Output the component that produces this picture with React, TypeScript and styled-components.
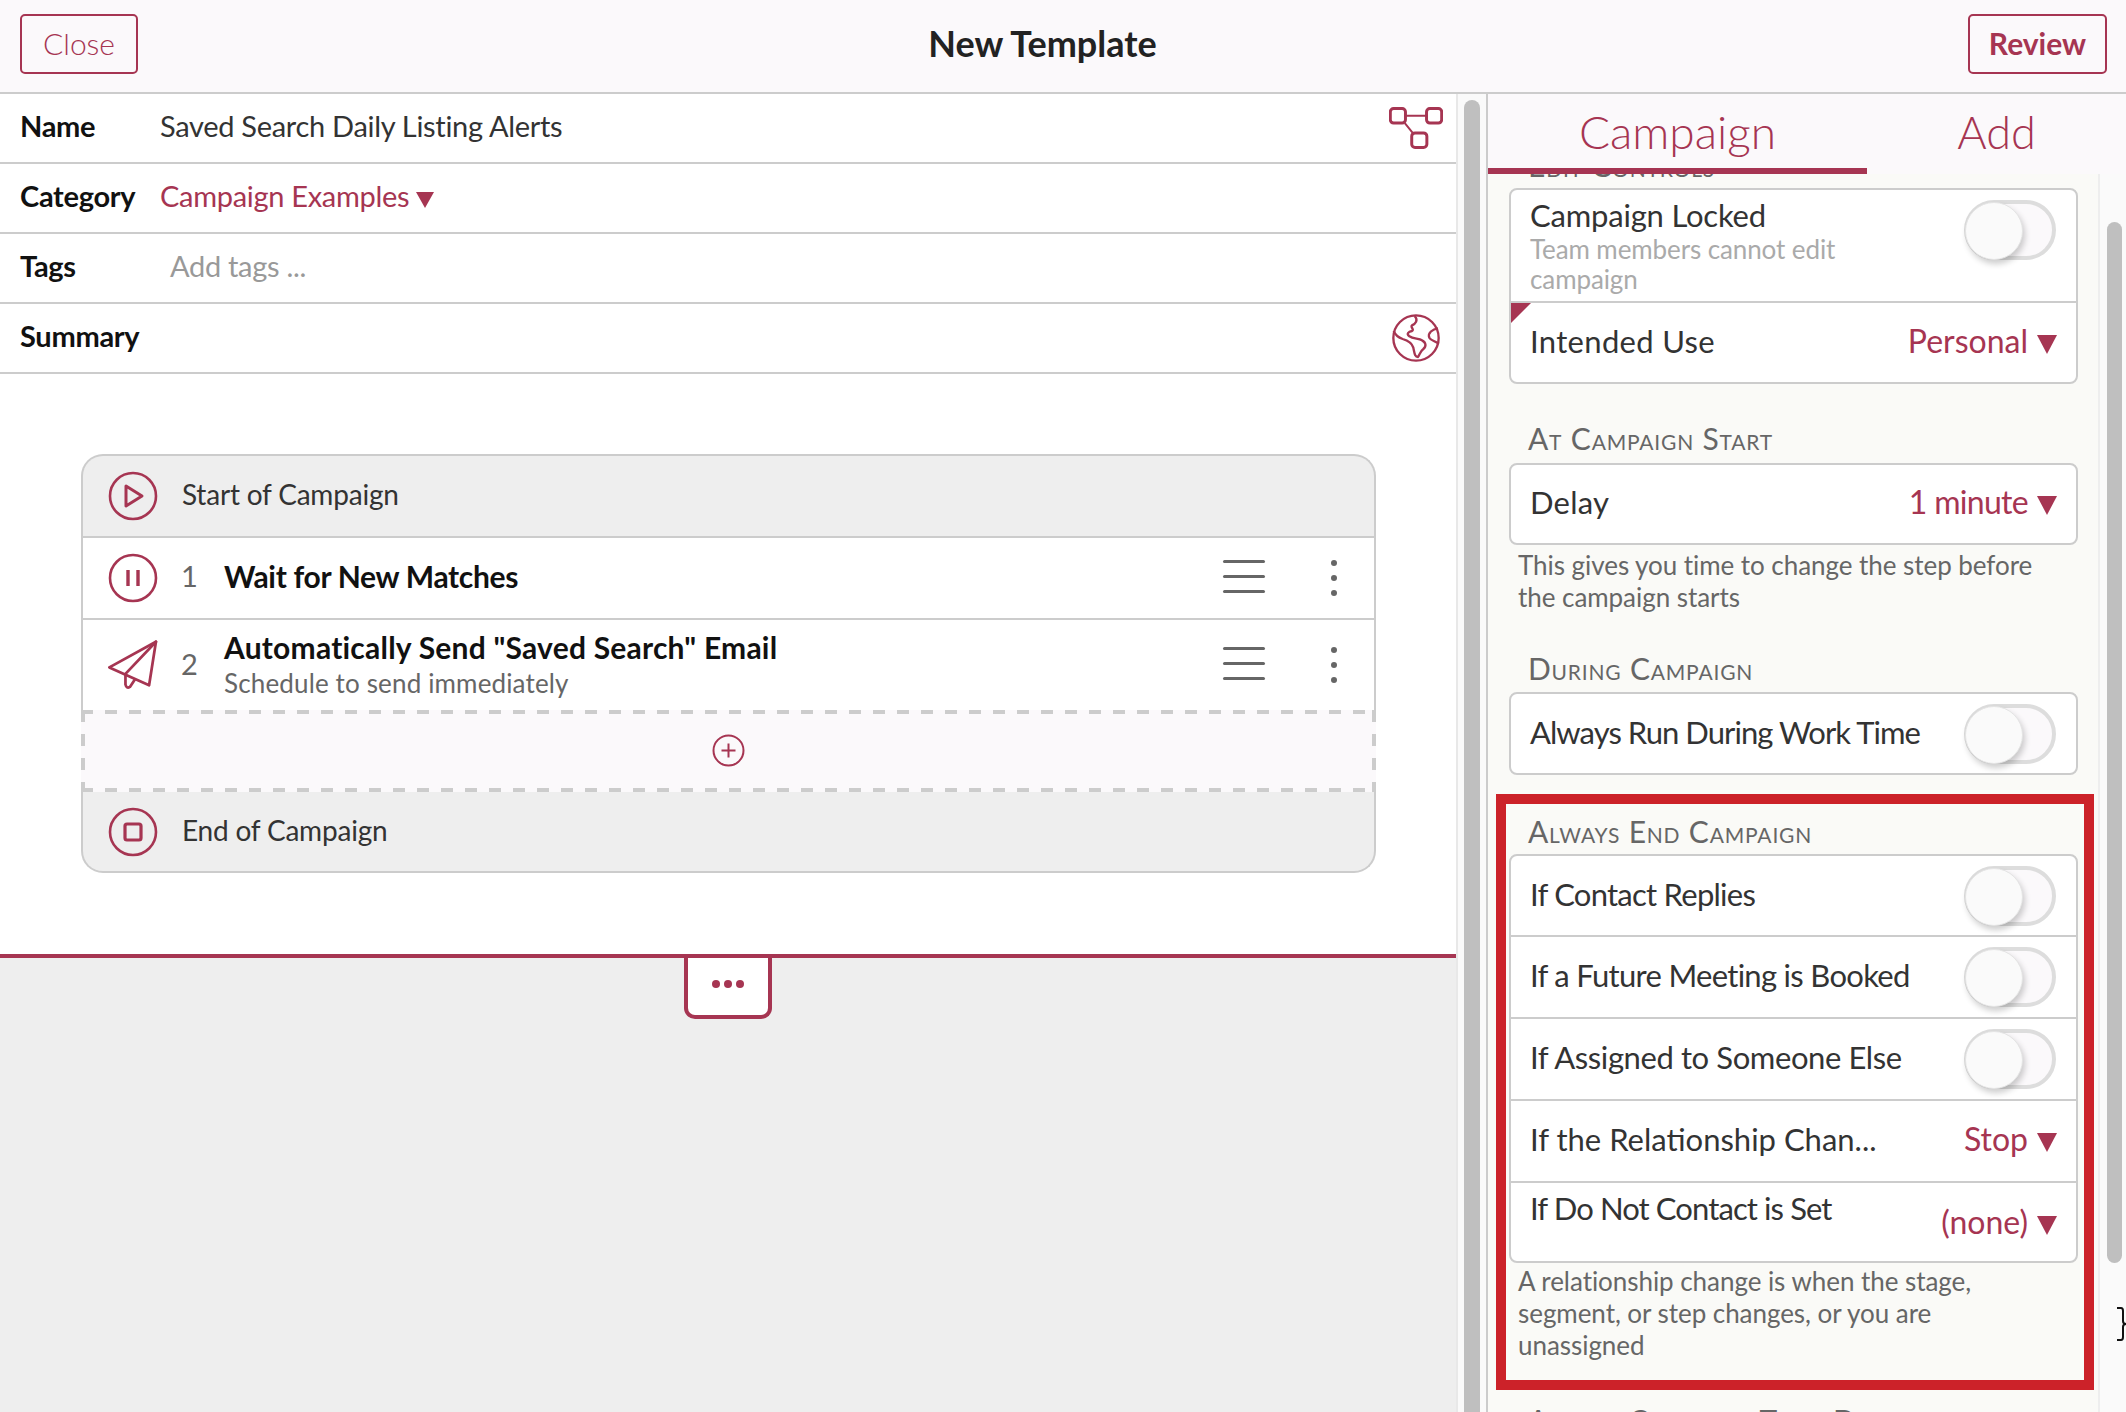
import React from "react";
import styled, { createGlobalStyle } from "styled-components";

const RED = "#a63552";
const FONT = `Lato, "Open Sans", "Liberation Sans", sans-serif`;

const Global = createGlobalStyle`
  html, body { margin: 0; padding: 0; background: #fff; }
  body { width: 2126px; height: 1412px; overflow: hidden; font-family: ${FONT}; color: #333; }
  * { box-sizing: border-box; }
`;

const Page = styled.div`
  position: relative;
  width: 2126px;
  height: 1412px;
  display: flex;
  flex-direction: column;
  overflow: hidden;
`;

const Header = styled.header`
  height: 94px;
  flex: none;
  display: flex;
  align-items: flex-start;
  justify-content: space-between;
  padding: 14px 19px 0 20px;
  background: #fbf9fb;
  border-bottom: 2px solid #ccc;
  position: relative;
`;

const HeadButton = styled.button<{ $strong?: boolean; $w: number }>`
  width: ${(p) => p.$w}px;
  height: 60px;
  background: transparent;
  border: 2.5px solid ${RED};
  border-radius: 5px;
  color: ${RED};
  font-family: ${FONT};
  font-size: 30px;
  font-weight: ${(p) => (p.$strong ? 700 : 300)};
  padding: 0 0 2px;
`;

const Title = styled.h1`
  position: absolute;
  left: 0;
  right: 0;
  top: 21px;
  margin: 0;
  text-align: center;
  font-size: 36px;
  line-height: 44px;
  font-weight: 700;
  color: #222;
  padding-right: 41px;
`;

const Main = styled.div`
  flex: 1;
  display: flex;
  min-height: 0;
`;

const Left = styled.section`
  width: 1456px;
  flex: none;
  display: flex;
  flex-direction: column;
`;

const FormRow = styled.div`
  height: 70px;
  flex: none;
  display: flex;
  align-items: center;
  padding: 0 13px 0 20px;
  border-bottom: 2px solid #ccc;
  font-size: 29px;
`;

const FormLabel = styled.span`
  width: 140px;
  flex: none;
  font-weight: 700;
  color: #111;
  letter-spacing: -0.3px;
  padding-bottom: 6px;
`;

const FormValue = styled.span<{ $tone?: "red" | "hint" }>`
  flex: 1;
  color: ${(p) => (p.$tone === "red" ? RED : p.$tone === "hint" ? "#999" : "#333")};
  padding-left: ${(p) => (p.$tone === "hint" ? 10 : 0)}px;
  font-weight: 400;
  letter-spacing: -0.3px;
  padding-bottom: 6px;
`;

const Caret = styled.span<{ $w?: number; $h?: number; $gap?: number }>`
  display: inline-block;
  width: 0;
  height: 0;
  margin-left: ${(p) => p.$gap ?? 9}px;
  border-left: ${(p) => (p.$w ?? 21) / 2}px solid transparent;
  border-right: ${(p) => (p.$w ?? 21) / 2}px solid transparent;
  border-top: ${(p) => p.$h ?? 19}px solid ${RED};
  vertical-align: -1px;
`;

const Canvas = styled.div`
  flex: none;
  padding: 80px 80px 81px 81px;
  border-bottom: 4px solid ${RED};
`;

const Flow = styled.div`
  background: #fff;
`;

const Terminal = styled.div<{ $end?: boolean }>`
  height: ${(p) => (p.$end ? 81 : 82)}px;
  background: #eee;
  display: flex;
  align-items: center;
  padding-left: 25px;
  gap: 24px;
  font-size: 28px;
  letter-spacing: -0.2px;
  color: #333;
  border: 2px solid #ccc;
  border-top-width: ${(p) => (p.$end ? 0 : 2)}px;
  border-bottom-width: ${(p) => (p.$end ? 2 : 0)}px;
  border-radius: ${(p) => (p.$end ? "0 0 22px 22px" : "22px 22px 0 0")};
`;

const TerminalLabel = styled.span`
  padding-bottom: 4px;
`;

const StepRow = styled.div<{ $h: number }>`
  height: ${(p) => p.$h}px;
  border: 2px solid #ccc;
  border-bottom: 0;
  display: flex;
  align-items: center;
  padding-left: 25px;
`;

const StepNumber = styled.span<{ $lift: number }>`
  width: 43px;
  margin-left: 23px;
  flex: none;
  font-size: 29px;
  color: #666;
  padding-bottom: ${(p) => p.$lift}px;
`;

const StepBody = styled.div<{ $lift: number }>`
  flex: 1;
  display: flex;
  flex-direction: column;
  padding-bottom: ${(p) => p.$lift}px;
`;

const StepTitle = styled.div<{ $sp: number }>`
  font-size: 30px;
  line-height: 38px;
  font-weight: 700;
  color: #111;
  letter-spacing: ${(p) => p.$sp}px;
`;

const StepSub = styled.div`
  font-size: 26px;
  line-height: 34px;
  color: #666;
  letter-spacing: 0.15px;
`;

const Burger = styled.div`
  width: 42px;
  flex: none;
  margin-right: 66px;
  display: flex;
  flex-direction: column;
  gap: 12px;
  margin-top: -4px;
  & > i {
    display: block;
    height: 3px;
    border-radius: 2px;
    background: #666;
  }
`;

const Dots = styled.div`
  width: 6px;
  flex: none;
  margin-right: 37px;
  display: flex;
  flex-direction: column;
  gap: 9px;
  & > i {
    display: block;
    height: 6px;
    border-radius: 50%;
    background: #666;
  }
`;

const Dropzone = styled.div`
  height: 82px;
  display: flex;
  align-items: center;
  justify-content: center;
  padding-bottom: 2px;
  background-color: #fbf9fb;
  background-image:
    repeating-linear-gradient(90deg, #ccc 0 12px, transparent 12px 24px),
    repeating-linear-gradient(90deg, #ccc 0 12px, transparent 12px 24px),
    repeating-linear-gradient(180deg, #ccc 0 12px, transparent 12px 24px),
    repeating-linear-gradient(180deg, #ccc 0 12px, transparent 12px 24px);
  background-size: 100% 4px, 100% 4px, 4px 100%, 4px 100%;
  background-position: 0 0, 0 100%, 0 0, 100% 0;
  background-repeat: no-repeat;
`;

const Drawer = styled.div`
  flex: 1;
  background: #eee;
  display: flex;
  justify-content: center;
`;

const DrawerTab = styled.button`
  width: 88px;
  height: 61px;
  background: #fff;
  border: 4px solid ${RED};
  border-top: 0;
  border-radius: 0 0 11px 11px;
  display: flex;
  align-items: center;
  justify-content: center;
  gap: 4px;
  padding: 0 0 5px;
  & > i {
    display: block;
    width: 8px;
    height: 8px;
    border-radius: 50%;
    background: ${RED};
  }
`;

const Gutter = styled.div`
  width: 32px;
  flex: none;
  background: #fafafa;
  border-left: 2px solid #e8e8e8;
  border-right: 2px solid #ccc;
  padding: 6px 0 0 6px;
`;

const Thumb = styled.div`
  width: 16px;
  height: 100%;
  background: #bfbfbf;
  border-radius: 8px 8px 0 0;
`;

const Right = styled.aside`
  flex: 1;
  min-width: 0;
  display: flex;
  flex-direction: column;
`;

const Tabs = styled.nav`
  height: 80px;
  flex: none;
  display: flex;
  background: #fbf9fb;
  position: relative;
  z-index: 1;
`;

const Tab = styled.div<{ $w: number; $active?: boolean }>`
  width: ${(p) => p.$w}px;
  height: 80px;
  text-align: center;
  font-size: ${(p) => (p.$active ? 46 : 45)}px;
  font-weight: 300;
  line-height: 76px;
  color: ${RED};
  border-bottom: ${(p) => (p.$active ? `6px solid ${RED}` : "0")};
`;

const Body = styled.div`
  flex: 1;
  min-height: 0;
  display: flex;
`;

const Scroller = styled.div`
  width: 612px;
  flex: none;
  height: 100%;
  overflow: hidden;
  background: #fafaf7;
  border-right: 2px solid #eee;
  padding: 0 21px;
`;

const Section = styled.div`
  margin-top: -24px;
`;

const Heading = styled.h3<{ $top?: number }>`
  margin: ${(p) => p.$top ?? 0}px 0 0 19px;
  height: 31px;
  font-size: 30px;
  line-height: 31px;
  letter-spacing: 0.8px;
  font-variant: small-caps;
  font-weight: 400;
  color: #666;
  white-space: nowrap;
`;

const Card = styled.div<{ $top?: number }>`
  margin-top: ${(p) => p.$top ?? 0}px;
  background: #fff;
  border: 2px solid #ccc;
  border-radius: 8px;
  width: 569px;
  overflow: hidden;
  position: relative;
`;

const Row = styled.div<{ $h: number; $top?: boolean }>`
  height: ${(p) => p.$h}px;
  display: flex;
  align-items: ${(p) => (p.$top ? "flex-start" : "center")};
  justify-content: space-between;
  padding: 0 19px;
  border-top: 2px solid #ccc;
  position: relative;
  &:first-child { border-top: 0; }
`;

const RowText = styled.div<{ $sp?: number; $pad?: number }>`
  font-size: 31px;
  line-height: 40px;
  color: #333;
  white-space: nowrap;
  letter-spacing: ${(p) => p.$sp ?? 0}px;
  padding-bottom: 4px;
  padding-top: ${(p) => p.$pad ?? 0}px;
`;

const RowSub = styled.div`
  font-size: 26px;
  line-height: 30px;
  color: #aaa;
  margin-top: -5px;
  letter-spacing: -0.1px;
`;

const Pick = styled.div<{ $pad?: number; $sp?: number }>`
  font-size: 32px;
  line-height: 40px;
  color: ${RED};
  white-space: nowrap;
  letter-spacing: ${(p) => p.$sp ?? 0}px;
  padding-bottom: 4px;
  padding-top: ${(p) => p.$pad ?? 0}px;
`;

const Flag = styled.span`
  position: absolute;
  left: 0;
  top: 0;
  width: 0;
  height: 0;
  border-top: 20px solid ${RED};
  border-right: 20px solid transparent;
`;

const Toggle = styled.span<{ $top?: number }>`
  display: block;
  position: relative;
  width: 92px;
  height: 60px;
  flex: none;
  margin-right: 1px;
  margin-top: ${(p) => p.$top ?? 0}px;
  border: 4px solid #ddd;
  border-radius: 30px;
  background: #fbf9fb;
  &::after {
    content: "";
    position: absolute;
    left: -3px;
    top: -2px;
    width: 56px;
    height: 56px;
    border-radius: 50%;
    background: #fafafa;
    border: 1px solid #e4e4e4;
    box-shadow: 2px 4px 6px rgba(0, 0, 0, 0.2);
  }
`;

const Note = styled.p<{ $pad: number }>`
  margin: 0 0 0 9px;
  font-size: 26px;
  line-height: 32px;
  color: #666;
  padding-top: ${(p) => p.$pad}px;
  letter-spacing: -0.05px;
`;

const Alert = styled.div`
  margin: 19px -13px 0;
  padding: 10px 3px 0;
  width: 598px;
  height: 596px;
  border: 10px solid #cc2229;
`;

const RightGutter = styled.div`
  flex: 1;
  background: #fafafa;
  padding: 48px 4px 0 7px;
`;

const RightThumb = styled.div`
  height: 1041px;
  background: #bfbfbf;
  border-radius: 8px;
`;

const Cursor = styled.svg`
  position: absolute;
  right: 0;
  top: 1307px;
`;

const GlobeSvg = styled.svg`
  margin-right: 2px;
  flex: none;
`;

const Ring = ({ children }: { children?: React.ReactNode }) => (
  <svg width="50" height="50" viewBox="0 0 50 50" style={{ flex: "none" }} fill="none" stroke={RED} strokeWidth="2.6">
    <circle cx="25" cy="25" r="23" />
    {children}
  </svg>
);

const Plane = () => (
  <svg width="50" height="50" viewBox="54 573 146 146" style={{ flex: "none" }} fill="none" stroke={RED} strokeWidth="8" strokeLinejoin="round" strokeLinecap="round">
    <path d="M194 578 L58 653 L174 705 Z" />
    <path d="M194 578 L105 672 L105 703 Q108 716 118 710 L132 689" />
  </svg>
);

const Network = () => (
  <svg width="54" height="42" viewBox="56 51 164 126" fill="none" stroke={RED} strokeLinejoin="round" style={{ flex: "none" }}>
    <rect x="60" y="55" width="46" height="44" rx="10" strokeWidth="9" />
    <rect x="170" y="55" width="46" height="44" rx="10" strokeWidth="9" />
    <rect x="125" y="129" width="46" height="44" rx="10" strokeWidth="9" />
    <path d="M106 77 H170 M104 99 L128 129" strokeWidth="6" />
  </svg>
);

const Globe = () => (
  <GlobeSvg width="50" height="50" viewBox="63 668 150 150" fill="none" stroke={RED} strokeWidth="7" strokeLinejoin="round">
    <circle cx="138" cy="743" r="68" />
    <path d="M134 677 C146 690 136 700 126 705 C120 710 134 718 126 722 C116 724 108 730 118 738 C130 746 146 744 156 750 C168 756 170 768 160 776 C152 782 150 790 144 800 C134 800 134 790 130 772 C126 758 112 750 98 746 C86 742 76 734 71 722" />
    <path d="M204 714 C188 716 172 728 178 742 C182 750 194 752 206 760" />
  </GlobeSvg>
);

export default function App() {
  return (
    <Page>
      <Global />
      <Header>
        <HeadButton $w={118}>Close</HeadButton>
        <Title>New Template</Title>
        <HeadButton $w={139} $strong>Review</HeadButton>
      </Header>
      <Main>
        <Left>
          <FormRow>
            <FormLabel>Name</FormLabel>
            <FormValue>Saved Search Daily Listing Alerts</FormValue>
            <Network />
          </FormRow>
          <FormRow>
            <FormLabel>Category</FormLabel>
            <FormValue $tone="red">Campaign Examples<Caret $w={18} $h={16} $gap={7} /></FormValue>
          </FormRow>
          <FormRow>
            <FormLabel>Tags</FormLabel>
            <FormValue $tone="hint">Add tags ...</FormValue>
          </FormRow>
          <FormRow>
            <FormLabel>Summary</FormLabel>
            <FormValue />
            <Globe />
          </FormRow>
          <Canvas>
            <Flow>
              <Terminal>
                <Ring><path d="M18 15 L34 25 L18 35 Z" strokeWidth="3" strokeLinejoin="round" /></Ring>
                <TerminalLabel>Start of Campaign</TerminalLabel>
              </Terminal>
              <StepRow $h={82}>
                <Ring><path d="M20 17 V33 M30 17 V33" strokeWidth="3.4" /></Ring>
                <StepNumber $lift={5}>1</StepNumber>
                <StepBody $lift={5}><StepTitle $sp={-0.3}>Wait for New Matches</StepTitle></StepBody>
                <Burger><i /><i /><i /></Burger>
                <Dots><i /><i /><i /></Dots>
              </StepRow>
              <StepRow $h={92}>
                <Plane />
                <StepNumber $lift={3}>2</StepNumber>
                <StepBody $lift={3}>
                  <StepTitle $sp={0.22}>Automatically Send "Saved Search" Email</StepTitle>
                  <StepSub>Schedule to send immediately</StepSub>
                </StepBody>
                <Burger><i /><i /><i /></Burger>
                <Dots><i /><i /><i /></Dots>
              </StepRow>
              <Dropzone>
                <svg width="33" height="33" viewBox="0 0 33 33" fill="none" stroke={RED} strokeWidth="2">
                  <circle cx="16.5" cy="16.5" r="15" />
                  <path d="M16.5 9.5 V23.5 M9.5 16.5 H23.5" />
                </svg>
              </Dropzone>
              <Terminal $end>
                <Ring><rect x="17" y="17" width="16" height="16" rx="2" strokeWidth="3.2" /></Ring>
                <TerminalLabel>End of Campaign</TerminalLabel>
              </Terminal>
            </Flow>
          </Canvas>
          <Drawer>
            <DrawerTab><i /><i /><i /></DrawerTab>
          </Drawer>
        </Left>
        <Gutter><Thumb /></Gutter>
        <Right>
          <Tabs>
            <Tab $w={379} $active>Campaign</Tab>
            <Tab $w={259}>Add</Tab>
          </Tabs>
          <Body>
            <Scroller>
              <Section>
                <Heading>Edit Controls</Heading>
                <Card $top={7}>
                  <Row $h={111} $top>
                    <div>
                      <RowText $sp={-0.2} $pad={5}>Campaign Locked</RowText>
                      <RowSub>Team members cannot edit<br />campaign</RowSub>
                    </div>
                    <Toggle $top={10} />
                  </Row>
                  <Row $h={81}>
                    <Flag />
                    <RowText $sp={0.33}>Intended Use</RowText>
                    <Pick>Personal<Caret /></Pick>
                  </Row>
                </Card>
                <Heading $top={39}>At Campaign Start</Heading>
                <Card $top={9}>
                  <Row $h={78}>
                    <RowText $sp={0.25}>Delay</RowText>
                    <Pick $sp={-0.7}>1 minute<Caret /></Pick>
                  </Row>
                </Card>
                <Note $pad={4}>This gives you time to change the step before<br />the campaign starts</Note>
                <Heading $top={40}>During Campaign</Heading>
                <Card $top={8}>
                  <Row $h={79}>
                    <RowText $sp={-0.95}>Always Run During Work Time</RowText>
                    <Toggle />
                  </Row>
                </Card>
                <Alert>
                  <Heading $top={2}>Always End Campaign</Heading>
                  <Card $top={7}>
                    <Row $h={79}><RowText $sp={-0.75}>If Contact Replies</RowText><Toggle /></Row>
                    <Row $h={82}><RowText $sp={-0.7}>If a Future Meeting is Booked</RowText><Toggle /></Row>
                    <Row $h={82}><RowText $sp={-0.4}>If Assigned to Someone Else</RowText><Toggle /></Row>
                    <Row $h={82}><RowText>If the Relationship Chan...</RowText><Pick>Stop<Caret /></Pick></Row>
                    <Row $h={80} $top>
                      <RowText $sp={-0.9} $pad={5}>If Do Not Contact is Set</RowText>
                      <Pick $pad={19}>(none)<Caret /></Pick>
                    </Row>
                  </Card>
                  <Note $pad={2}>A relationship change is when the stage,<br />segment, or step changes, or you are<br />unassigned</Note>
                </Alert>
                <Heading $top={15}>Always Campaign Then Do</Heading>
              </Section>
            </Scroller>
            <RightGutter><RightThumb /></RightGutter>
          </Body>
        </Right>
      </Main>
      <Cursor width="9" height="34" viewBox="0 0 9 34" fill="none" stroke="#111" strokeWidth="2">
        <path d="M0 1 H4 Q6 1 6 4 V14 Q6 17 9 17 Q6 17 6 20 V30 Q6 33 4 33 H0" />
      </Cursor>
    </Page>
  );
}
